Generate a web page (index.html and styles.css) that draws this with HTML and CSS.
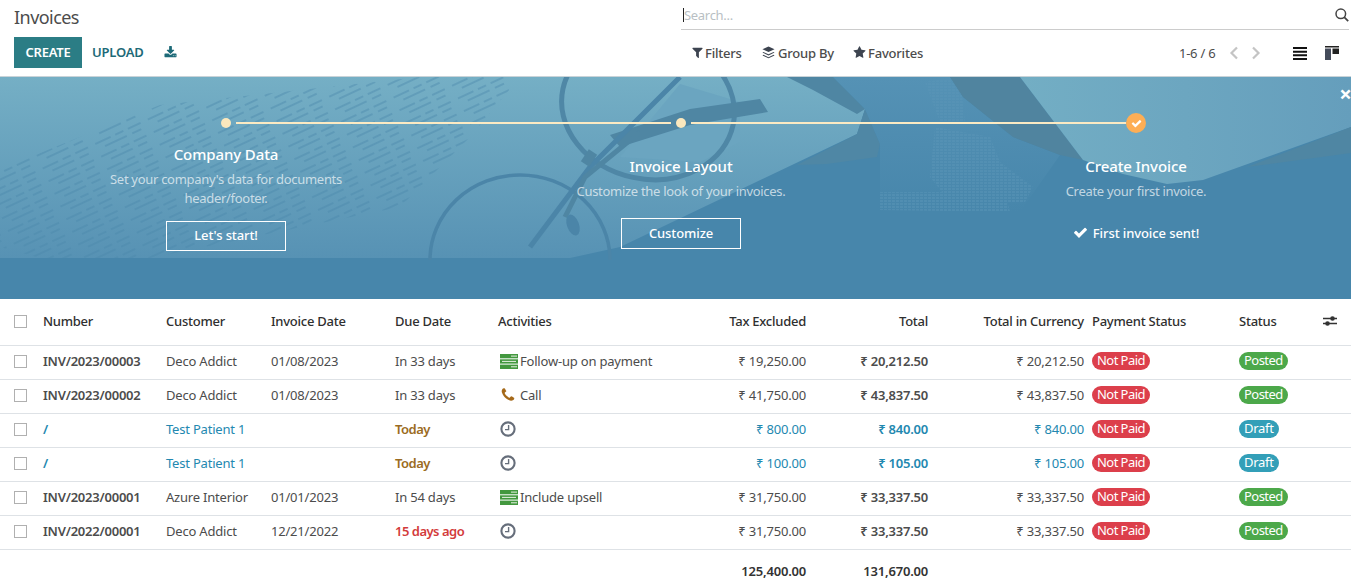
FILE: index.html
```html
<!DOCTYPE html>
<html lang="en">
<head>
<meta charset="utf-8">
<title>Invoices</title>
<link rel="stylesheet" href="styles.css">
</head>
<body>
<svg class="defs" width="0" height="0">
  <symbol id="i-check" viewBox="0 0 1792 1792"><path d="M1671 566q0 40-28 68l-724 724-136 136q-28 28-68 28t-68-28l-136-136-362-362q-28-28-28-68t28-68l136-136q28-28 68-28t68 28l294 295 656-657q28-28 68-28t68 28l136 136q28 28 28 68z"/></symbol>
  <symbol id="i-clock" viewBox="0 0 16 16"><circle cx="8" cy="8" r="6.6" fill="none" stroke="#666e7b" stroke-width="2.100"/><path d="M8.600 4v4.600H5" fill="none" stroke="#666e7b" stroke-width="1.400"/></symbol>
  <symbol id="i-stack" viewBox="0 0 18 15"><rect width="18" height="4.300" fill="#43983f"/><rect y="5.300" width="18" height="4.300" fill="#43983f"/><rect y="10.600" width="18" height="4.400" fill="#43983f"/><path d="M11 2.100h6M2 7.400h14M11 12.800h6" stroke="#e8f2e6" stroke-width="1"/></symbol>
</svg>

<header class="panel">
  <div class="panel-left">
    <h1 class="title">Invoices</h1>
    <div class="actions">
      <button class="btn-create">CREATE</button>
      <button class="btn-link">UPLOAD</button>
      <svg class="ico-download" viewBox="0 0 1792 1792"><path d="M1344 1344q0-26-19-45t-45-19-45 19-19 45 19 45 45 19 45-19 19-45zm256 0q0-26-19-45t-45-19-45 19-19 45 19 45 45 19 45-19 19-45zm128-224v320q0 40-28 68t-68 28H160q-40 0-68-28t-28-68v-320q0-40 28-68t68-28h465l135 136q58 56 136 56t136-56l136-136h464q40 0 68 28t28 68zm-325-569q17 41-14 70l-448 448q-18 19-45 19t-45-19L403 621q-31-29-14-70 17-39 59-39h256V64q0-26 19-45t45-19h256q26 0 45 19t19 45v448h256q42 0 59 39z"/></svg>
    </div>
  </div>
  <div class="panel-right">
    <div class="search">
      <span class="caret"></span><span class="placeholder">Search...</span>
      <svg class="ico-search" viewBox="0 0 14 14"><circle cx="5.800" cy="5.800" r="4.800" fill="none" stroke="#444" stroke-width="1.500"/><path d="M9.200 9.200l4 4" stroke="#444" stroke-width="1.800"/></svg>
    </div>
    <div class="tools">
      <div class="filters">
        <span class="filter filter-first"><svg class="ico-f" viewBox="0 0 1792 1792"><path d="M1595 295q17 41-14 70l-493 493v742q0 42-39 59-13 5-25 5-27 0-45-19l-256-256q-19-19-19-45V858L211 365q-31-29-14-70 17-39 59-39h1280q42 0 59 39z"/></svg>Filters</span>
        <span class="filter"><svg class="ico-g" viewBox="0 0 14 14"><path d="M7 0.500l6.500 3-6.500 3-6.500-3z"/><path d="M1.500 6.400L7 9l5.500-2.600 1 .7L7 10.200.500 7.100zM1.500 9.400L7 12l5.500-2.600 1 .7L7 13.200.500 10.100z"/></svg>Group By</span>
        <span class="filter"><svg class="ico-s" viewBox="0 0 1792 1792"><path d="M1728 647q0 22-26 48l-363 354 86 500q1 7 1 20 0 21-10.500 35.500T1385 1619q-19 0-40-12l-449-236-449 236q-22 12-40 12-21 0-31.500-14.500T365 1569q0-6 2-20l86-500L89 695q-25-27-25-48 0-37 56-46l502-73L847 73q19-41 49-41t49 41l225 455 502 73q56 9 56 46z"/></svg>Favorites</span>
      </div>
      <div class="pager">
        <span class="pager-text">1-6 / 6</span>
        <svg class="ico-chev" viewBox="0 0 10 14"><path d="M8 1.500L2.500 7 8 12.500" fill="none" stroke="#c4c4c4" stroke-width="2.200"/></svg>
        <svg class="ico-chev" viewBox="0 0 10 14"><path d="M2 1.500L7.500 7 2 12.500" fill="none" stroke="#c4c4c4" stroke-width="2.200"/></svg>
      </div>
      <div class="views">
        <svg class="ico-view" viewBox="0 0 14 14"><path d="M0 1h14v2H0zM0 4.700h14v2H0zM0 8.300h14v2H0zM0 12h14v2H0z" fill="#111"/></svg>
        <svg class="ico-view" viewBox="0 0 14 14"><path d="M0 0h14v1.500H0z" fill="#222"/><path d="M0 2.500h6v11.500H0z" fill="#444b5a"/><path d="M7.500 2.500H14V8H7.500z" fill="#222"/></svg>
      </div>
    </div>
  </div>
</header>

<section class="banner">
  <svg class="banner-art" viewBox="0 0 1351 222" preserveAspectRatio="none" aria-hidden="true">
    <defs>
      <linearGradient id="paper" x1="0" y1="0" x2="0" y2="1"><stop offset="0" stop-color="#75afc5"/><stop offset="1" stop-color="#5792b4"/></linearGradient>
      <linearGradient id="paper2" x1="0" y1="0" x2="1" y2="0"><stop offset="0" stop-color="#73aec4"/><stop offset="1" stop-color="#659ebc"/></linearGradient>
      <linearGradient id="middle" x1="0" y1="0" x2="0" y2="1"><stop offset="0" stop-color="#5592b5"/><stop offset="1" stop-color="#4786ab"/></linearGradient>
      <pattern id="words" width="58" height="14" patternUnits="userSpaceOnUse" patternTransform="rotate(-25)">
        <path d="M0 3h17M22 3h9M36 3h14M8 9h24M38 9h10" stroke="#4b88ab" stroke-width="1.800"/>
      </pattern>
      <pattern id="dither" width="4" height="3" patternUnits="userSpaceOnUse"><path d="M0 1h3" stroke="#5a95b7" stroke-width="1"/></pattern>
      <clipPath id="clip-top"><rect width="1351" height="183"/></clipPath>
    </defs>
    <rect width="1351" height="222" fill="#4786ab"/>
    <path d="M0 0H795L865 32 857 57 620 170 570 181 0 181z" fill="url(#paper)"/>
    <path d="M0 92L160 28 420 0H520L470 60 400 130 150 181 40 181 0 170z" fill="url(#words)" opacity=".42"/>
    <path d="M787 0H833L865 32 857 37 813 13z" fill="#4f86a3"/>
    <path d="M865 32L880 67 877 80 827 87 797 88 857 57z" fill="#4f87a5"/>
    <path d="M833 0H950L963 20 1013 60 1060 78 1020 135H880V67L865 32z" fill="url(#middle)"/>
    <path d="M925 5L960 0 965 45 940 45zM935 50L990 60 1000 85 1033 110 1025 125 950 125 930 100zM880 115H1005L1010 135 880 133z" fill="url(#dither)"/>
    <path d="M950 0H1020L1083 83 1060 78 1013 60 963 20z" fill="#50849f"/>
    <path d="M1020 0H1351V50L1203 103 1167 107 1123 97 1083 83z" fill="url(#paper2)"/>
    <path d="M1351 50L1247 90 1351 76z" fill="#4f86a3"/>
    <path d="M680 7L740 25V65L700 85 620 80z" fill="#6ba5c0"/>
    <g clip-path="url(#clip-top)" fill="none">
      <ellipse cx="648" cy="30" rx="87" ry="72" stroke="#4f87a6" stroke-width="5" transform="rotate(12 648 30)"/>
      <ellipse cx="520" cy="183" rx="90" ry="85" stroke="#4b85a8" stroke-width="3.500"/>
      <path d="M760 22L768 35 690 48 620 70 610 58 690 32z" fill="#4f86a3"/>
      <path d="M680 0L590 90 530 170" stroke="#4b85a8" stroke-width="5"/>
      <path d="M640 55L585 100 565 140" stroke="#4f86a3" stroke-width="5"/>
      <ellipse cx="573" cy="148" rx="6" ry="11" fill="#4b85a8" transform="rotate(-20 573 148)"/>
      <path d="M593 75l-8 12" stroke="#4f86a3" stroke-width="10"/>
    </g>
  </svg>
  <button class="banner-close">×</button>
  <div class="steps">
    <div class="step step-first">
      <div class="track"><span class="line line-none"></span><span class="dot"></span><span class="line"></span></div>
      <h2 class="step-title">Company Data</h2>
      <p class="step-desc">Set your company's data for documents<br>header/footer.</p>
      <button class="step-btn">Let's start!</button>
    </div>
    <div class="step">
      <div class="track"><span class="line"></span><span class="dot"></span><span class="line"></span></div>
      <h2 class="step-title">Invoice Layout</h2>
      <p class="step-desc">Customize the look of your invoices.</p>
      <button class="step-btn">Customize</button>
    </div>
    <div class="step">
      <div class="track"><span class="line"></span><span class="dot-done"><svg class="ico-done" viewBox="0 0 1792 1792"><use href="#i-check"/></svg></span><span class="line line-none"></span></div>
      <h2 class="step-title">Create Invoice</h2>
      <p class="step-desc">Create your first invoice.</p>
      <div class="step-sent"><svg class="ico-sent" viewBox="0 0 1792 1792"><use href="#i-check"/></svg>First invoice sent!</div>
    </div>
  </div>
</section>

<table class="list">
  <colgroup>
    <col class="c-check"><col class="c-number"><col class="c-customer"><col class="c-date"><col class="c-due"><col class="c-activity"><col class="c-tax"><col class="c-total"><col class="c-cur"><col class="c-pay"><col class="c-status"><col class="c-opt">
  </colgroup>
  <thead>
    <tr>
      <th class="check"><span class="box"></span></th>
      <th>Number</th><th>Customer</th><th>Invoice Date</th><th>Due Date</th><th>Activities</th>
      <th class="num">Tax Excluded</th><th class="num">Total</th><th class="num">Total in Currency</th>
      <th>Payment Status</th><th>Status</th>
      <th><svg class="ico-sliders" viewBox="0 0 14 12"><path d="M0 3.500h14M0 8.500h14" stroke="#333" stroke-width="1.300"/><circle cx="9.500" cy="3.500" r="2.300" fill="#333"/><circle cx="4.500" cy="8.500" r="2.300" fill="#333"/></svg></th>
    </tr>
  </thead>
  <tbody>
    <tr>
      <td class="check"><span class="box"></span></td><td class="strong">INV/2023/00003</td><td>Deco Addict</td><td>01/08/2023</td><td>In 33 days</td>
      <td><span class="activity"><svg class="ico-act"><use href="#i-stack"/></svg>Follow-up on payment</span></td>
      <td class="num">₹ 19,250.00</td><td class="num strong">₹ 20,212.50</td><td class="num">₹ 20,212.50</td>
      <td><span class="badge red">Not Paid</span></td><td><span class="badge green">Posted</span></td><td></td>
    </tr>
    <tr>
      <td class="check"><span class="box"></span></td><td class="strong">INV/2023/00002</td><td>Deco Addict</td><td>01/08/2023</td><td>In 33 days</td>
      <td><span class="activity"><svg class="ico-phone" viewBox="0 0 1792 1792"><path d="M1600 1240q0 27-10 70.500t-21 68.500q-21 50-122 106-94 51-186 51-27 0-53-3.500t-57.500-12.500-47-14.500-55.500-20.500-49-18q-98-35-175-83-127-79-264-216T344 904q-48-77-83-175-3-9-18-49t-20.500-55.500-14.500-47T195.500 520 192 467q0-92 51-186 56-101 106-122 25-11 68.500-21t70.500-10q14 0 21 3 18 6 53 76 11 19 30 54t35 63.500 31 53.500q3 4 17.500 25t21.500 35.500 7 28.500q0 20-28.500 50t-62 55-62 53-28.500 46q0 9 5 22.500t8.500 20.500 14 24 11.500 19q76 137 174 235t235 174q2 1 19 11.500t24 14 20.500 8.500 22.500 5q18 0 46-28.500t53-62 55-62 50-28.500q14 0 28.500 7t35.500 21.500 25 17.500q25 15 53.500 31t63.500 35 54 30q70 35 76 53 3 7 3 21z"/></svg>Call</span></td>
      <td class="num">₹ 41,750.00</td><td class="num strong">₹ 43,837.50</td><td class="num">₹ 43,837.50</td>
      <td><span class="badge red">Not Paid</span></td><td><span class="badge green">Posted</span></td><td></td>
    </tr>
    <tr class="draft">
      <td class="check"><span class="box"></span></td><td class="strong">/</td><td>Test Patient 1</td><td></td><td class="today">Today</td>
      <td><span class="activity"><svg class="ico-clock"><use href="#i-clock"/></svg></span></td>
      <td class="num">₹ 800.00</td><td class="num strong">₹ 840.00</td><td class="num">₹ 840.00</td>
      <td><span class="badge red">Not Paid</span></td><td><span class="badge blue">Draft</span></td><td></td>
    </tr>
    <tr class="draft">
      <td class="check"><span class="box"></span></td><td class="strong">/</td><td>Test Patient 1</td><td></td><td class="today">Today</td>
      <td><span class="activity"><svg class="ico-clock"><use href="#i-clock"/></svg></span></td>
      <td class="num">₹ 100.00</td><td class="num strong">₹ 105.00</td><td class="num">₹ 105.00</td>
      <td><span class="badge red">Not Paid</span></td><td><span class="badge blue">Draft</span></td><td></td>
    </tr>
    <tr>
      <td class="check"><span class="box"></span></td><td class="strong">INV/2023/00001</td><td>Azure Interior</td><td>01/01/2023</td><td>In 54 days</td>
      <td><span class="activity"><svg class="ico-act"><use href="#i-stack"/></svg>Include upsell</span></td>
      <td class="num">₹ 31,750.00</td><td class="num strong">₹ 33,337.50</td><td class="num">₹ 33,337.50</td>
      <td><span class="badge red">Not Paid</span></td><td><span class="badge green">Posted</span></td><td></td>
    </tr>
    <tr>
      <td class="check"><span class="box"></span></td><td class="strong">INV/2022/00001</td><td>Deco Addict</td><td>12/21/2022</td><td class="late">15 days ago</td>
      <td><span class="activity"><svg class="ico-clock"><use href="#i-clock"/></svg></span></td>
      <td class="num">₹ 31,750.00</td><td class="num strong">₹ 33,337.50</td><td class="num">₹ 33,337.50</td>
      <td><span class="badge red">Not Paid</span></td><td><span class="badge green">Posted</span></td><td></td>
    </tr>
  </tbody>
  <tfoot>
    <tr>
      <td colspan="6"></td><td class="num">125,400.00</td><td class="num">131,670.00</td><td colspan="4"></td>
    </tr>
  </tfoot>
</table>
</body>
</html>
```
FILE: styles.css
```css
* { box-sizing: border-box; }
html, body { margin: 0; padding: 0; }
body {
  font-family: "Noto Sans", "Open Sans", sans-serif;
  font-size: 13px;
  color: #4c4c4c;
  background: #fff;
  overflow: hidden;
}
button { font: inherit; background: none; border: 0; padding: 0; cursor: pointer; }
.defs { position: absolute; }

/* control panel */
.panel {
  display: grid;
  grid-template-columns: 681px 1fr;
  height: 77px;
  border-bottom: 1px solid #c9d3d8;
}
.panel-left { padding: 6px 0 0 14px; }
.title { margin: 0; font-size: 18px; font-weight: 400; line-height: 22px; color: #4c4c4c; letter-spacing: -.55px; }
.actions { display: flex; align-items: center; margin-top: 9px; }
.btn-create {
  width: 68px; height: 31px; padding-bottom: 2px;
  background: #2b7d85; color: #fff;
  font-size: 13px; font-weight: 600; letter-spacing: -.2px;
}
.btn-link { margin-left: 10px; padding-bottom: 2px; color: #1d6a78; font-size: 13px; font-weight: 600; letter-spacing: -.2px; }
.ico-download { width: 13px; height: 13px; margin: 0 0 1px 20px; fill: #1d6a78; }

.panel-right { padding-right: 2px; }
.search {
  display: flex; align-items: center;
  height: 30px;
  border-bottom: 1px solid #ccc;
  padding-left: 2px;
}
.caret { width: 1px; height: 14px; background: #222; }
.placeholder { flex: 1; color: #b9bfc4; font-size: 13px; letter-spacing: -.3px; }
.ico-search { width: 14px; height: 14px; }
.tools { display: flex; align-items: center; height: 46px; padding-bottom: 1px; }
.filters { display: flex; width: 498px; padding-left: 10px; gap: 19px; }
.filter { display: flex; align-items: center; color: #4c4c4c; font-weight: 500; font-size: 13px; letter-spacing: -.2px; }
.filter-first { width: 52px; }
.ico-f { width: 13px; height: 13px; margin-right: 1px; fill: #3d4450; }
.ico-g { width: 13px; height: 13px; margin-right: 3px; fill: #3d4450; }
.ico-s { width: 13px; height: 13px; margin-right: 2px; fill: #3d4450; }
.pager { display: flex; align-items: center; width: 114px; }
.pager-text { width: 50px; letter-spacing: -.25px; }
.ico-chev { width: 10px; height: 14px; margin-right: 12px; }
.views { display: flex; gap: 18px; }
.ico-view { width: 14px; height: 14px; }

/* banner */
.banner { position: relative; height: 222px; overflow: hidden; background: #4786ab; color: #fff; }
.banner-art { position: absolute; inset: 0; width: 100%; height: 100%; }
.banner-close {
  position: absolute; top: 5px; right: -1px; width: 13px;
  color: #fff; font-size: 22px; font-weight: 700; line-height: 22px;
}
.steps {
  position: relative;
  display: grid;
  grid-template-columns: repeat(3, 455px);
  margin-left: -1.5px;
  padding-top: 36px;
}
.step { display: flex; flex-direction: column; align-items: center; text-align: center; }
.track { display: flex; align-items: center; width: 100%; height: 20px; }
.line { flex: 1; height: 2px; background: #fbeac3; }
.line-none { background: transparent; }
.dot { width: 10px; height: 10px; margin: 0 5px; border-radius: 50%; background: #fbe8bd; }
.dot-done {
  display: flex; align-items: center; justify-content: center;
  width: 20px; height: 20px; border-radius: 50%; background: #fdae55;
}
.ico-done { width: 11px; height: 11px; fill: #fff; }
.step-title { margin: 23px 0 0; font-size: 15px; font-weight: 500; line-height: 20px; color: #fff; letter-spacing: -.1px; }
.step-desc { margin: 5.5px 0 0; line-height: 19px; color: rgba(255,255,255,.68); letter-spacing: -.3px; }
.step-btn, .step-sent {
  display: flex; align-items: center; justify-content: center;
  width: 120px; height: 31px; padding-bottom: 2px;
  margin-top: 17.5px;
  color: #fff; font-weight: 500; font-size: 13px; letter-spacing: -.1px;
  white-space: nowrap;
}
.step-btn { border: 1px solid #fff; }
.ico-sent { width: 15px; height: 15px; margin-right: 5px; fill: #fff; flex: none; }
.step-first .step-title { margin-top: 11px; }
.step-first .step-btn { margin-top: 13.5px; height: 30px; }

/* list */
.list { width: 100%; border-collapse: collapse; table-layout: fixed; }
.c-check { width: 39px; } .c-number { width: 123px; } .c-customer { width: 105px; }
.c-date { width: 124px; } .c-due { width: 103px; } .c-activity { width: 196px; }
.c-tax { width: 120px; } .c-total { width: 122px; } .c-cur { width: 156px; }
.c-pay { width: 147px; } .c-status { width: 84px; } .c-opt { width: 32px; }
th, td { padding: 0 4px; text-align: left; white-space: nowrap; vertical-align: middle; }
th { height: 46px; padding-bottom: 1px; font-weight: 500; color: #2f2f2f; border-bottom: 1px solid #dee2e6; letter-spacing: -.25px; }
td { height: 34px; padding-bottom: 2px; border-bottom: 1px solid #dee2e6; letter-spacing: -.2px; }
.num { text-align: right; }
.strong { font-weight: 600; letter-spacing: -.22px; }
.check { padding: 0 0 0 14px; }
td.check { padding-bottom: 1px; }
.box { display: block; width: 13px; height: 13px; border: 1px solid #b0b0b0; background: #fff; }
.draft td { color: #2388b0; }
.draft td.today, .today { color: #9b6b22; font-weight: 600; letter-spacing: -.5px; }
.late { color: #d33b3b; font-weight: 600; letter-spacing: -.5px; }
.activity { display: flex; align-items: center; }
.ico-act { width: 18px; height: 15px; margin: 0 2px 0 2px; flex: none; }
.ico-phone { width: 16px; height: 16px; margin: 0 4px 0 2px; fill: #a5691a; }
.ico-clock { width: 16px; height: 16px; margin-left: 2px; }
.badge {
  display: inline-block;
  height: 18px; padding: 0 5px; margin-bottom: 1px;
  border-radius: 9px;
  color: #fff; font-size: 13px; line-height: 17px; letter-spacing: -.55px;
  vertical-align: middle;
}
.red { background: #dc3f4b; }
.green { background: #4ca84a; }
.blue { background: #339fb8; letter-spacing: -.3px; }
.ico-sliders { display: block; width: 14px; height: 12px; }
tfoot td { height: 33px; border-bottom: 0; font-weight: 600; color: #333; padding: 10px 4px 0; }
```
